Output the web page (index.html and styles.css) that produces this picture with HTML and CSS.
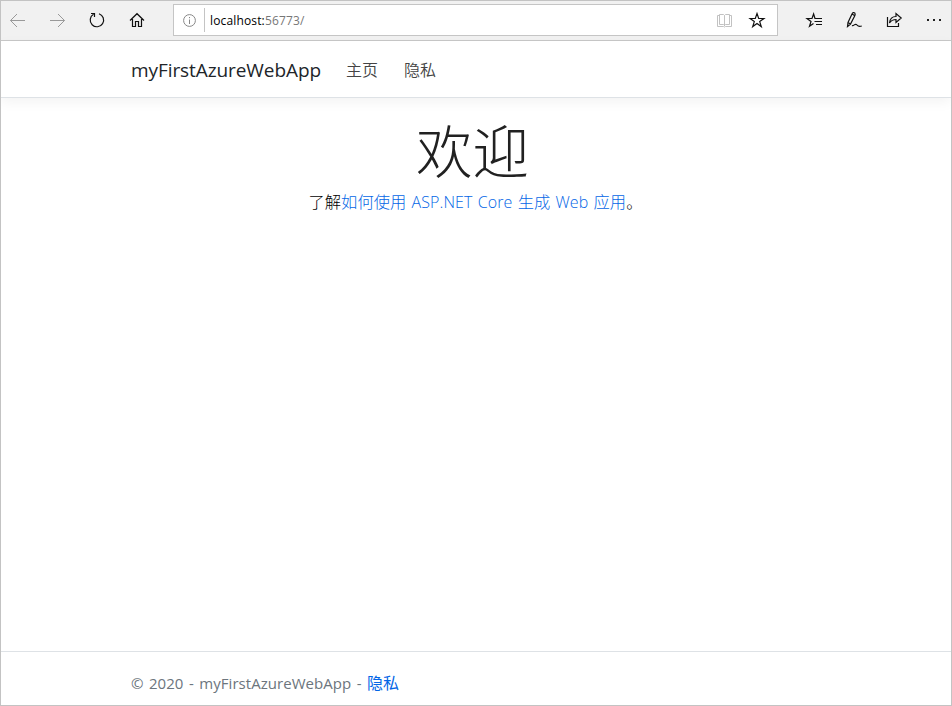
FILE: index.html
```html
<!DOCTYPE html>
<html lang="zh-CN">
<head>
<meta charset="utf-8">
<title>myFirstAzureWebApp</title>
<link rel="stylesheet" href="styles.css">
</head>
<body>
<div class="window">
  <div class="toolbar">
    <div class="nav-buttons">
      <svg class="icon muted" viewBox="0 0 16 16"><path d="M16 8.500H1.500M8 2L1.500 8.500 8 15"/></svg>
      <svg class="icon muted" viewBox="0 0 16 16"><path d="M1 8.500H15.500M9 2l6.500 6.500L9 15"/></svg>
      <svg class="icon" viewBox="0 0 16 16"><path class="bold" d="M10 1.700A6.700 6.700 0 1 1 4.500 2.300M2 1.500H5.500V5"/></svg>
      <svg class="icon" viewBox="0 0 16 16"><path class="bold" d="M1 8.500L8 1.700l7 6.800M3.500 7v7.500h3v-5h3v5h3V7"/></svg>
    </div>
    <div class="address">
      <svg class="info" viewBox="0 0 14 14"><circle cx="7.500" cy="7.500" r="5.900"/><path d="M7.500 6.500V11M7.500 4v1.200"/></svg>
      <span class="divider"></span>
      <span class="url">localhost:<span class="port">56773/</span></span>
      <svg class="icon book" viewBox="0 0 16 16"><path d="M8.500 3.500V14M8.500 3.500L7.500 2.500h-4v10h4l1 1 1-1h4v-10h-4zM3.500 3.500h-2v11H7.500l1 .5 1-.5h6v-11h-2"/></svg>
      <svg class="icon star" viewBox="0 0 16 16"><path class="bold" d="M8 1.500l1.700 5h5.200l-4.200 3.100 1.600 5L8 11.500l-4.300 3.100 1.600-5L1.100 6.500h5.200z"/></svg>
    </div>
    <div class="actions">
      <svg class="icon" viewBox="0 0 16 16"><path class="bold" d="M9 6.500L7.600 2 6 6.500H1l4 3-1.500 4.800L7.500 11.500M8.500 6.500H16M8.500 9.500H16M10 12.500h6"/></svg>
      <svg class="icon" viewBox="0 0 16 16"><path class="bold" d="M1.500 14.500L2 10.500 6 2Q7.200-.2 8.800 1 9.600 2 8.800 3.800L4.500 12zM6 2l2.500 1.500M2 10.500L4.500 12M6 13.500C8 14.500 9 10.500 11 13c1.200 1.600 2.500 1.800 4.800 1"/></svg>
      <svg class="icon" viewBox="0 0 16 16"><path class="bold" d="M1.500 5v9.500h11V11M3.500 11C4 6.500 6.500 4.500 10 4.500V1.500l5.200 4.500L10 10.500v-3C7 7.500 5 8.800 3.500 11z"/></svg>
      <svg class="icon" viewBox="0 0 16 16"><path class="dots" d="M1 7h2v2H1zM7 7h2v2H7zM13 7h2v2h-2z"/></svg>
    </div>
  </div>
  <header class="site-header">
    <span class="brand">myFirstAzureWebApp</span>
    <span class="nav-link">主页</span>
    <span class="nav-link">隐私</span>
  </header>
  <main class="content">
    <h1 class="title">欢迎</h1>
    <p class="lead">了解<a class="link">如何使用 <span class="latin">ASP.NET Core</span> 生成 <span class="latin">Web</span> 应用</a>。</p>
  </main>
  <footer class="site-footer"><span class="copyright">© 2020 - myFirstAzureWebApp - </span><a class="link">隐私</a></footer>
</div>
</body>
</html>
```
FILE: styles.css
```css
* { box-sizing: border-box; }
body {
  margin: 0;
  background: #fff;
  color: #212529;
  font-family: "Open Sans", "Noto Sans CJK SC", sans-serif;
}
.window {
  width: 952px;
  height: 706px;
  border: 1px solid #c3c3c3;
  display: flex;
  flex-direction: column;
  overflow: hidden;
}
.toolbar {
  height: 40px;
  flex: none;
  display: flex;
  align-items: center;
  padding-bottom: 1px;
  background: #f1f1f1;
  border-bottom: 1px solid #c8c8c8;
}
.nav-buttons { display: flex; gap: 24px; padding-left: 8px; width: 172px; }
.icon { width: 16px; height: 16px; flex: none; fill: none; stroke: #111; stroke-width: 1; overflow: visible; }
.bold { stroke-width: 1.2; }
.muted { stroke: #999; }
.dots { fill: #222; stroke: none; }
.address {
  width: 605px;
  height: 32px;
  display: flex;
  align-items: center;
  border: 1px solid #c5c5c5;
  background: #fff;
  padding: 0 12px 0 8px;
}
.info { width: 14px; height: 14px; fill: none; stroke: #888; stroke-width: 1; overflow: visible; }
.divider { width: 1px; height: 24px; background: #c4c4c4; margin: 0 5px 0 8px; }
.url { font-size: 12px; color: #000; letter-spacing: .15px; flex: 1; padding-top: 1px; }
.port { color: #777; }
.book { stroke: #bbb; stroke-width: .9; margin-right: 17px; }
.actions { display: flex; gap: 24px; padding-left: 28px; }
.site-header {
  height: 57px;
  flex: none;
  display: flex;
  align-items: center;
  padding: 0 0 0 130px;
  border-bottom: 1px solid #dee2e6;
  box-shadow: 0 4px 12px rgba(0,0,0,.05);
}
.brand { width: 215px; font-size: 19px; letter-spacing: -.08px; padding-top: 2px; }
.nav-link { width: 58px; font-size: 16px; font-weight: 350; color: #444; }
.content { flex: 1; text-align: center; padding: 18px 7px 0 0; }
.title { margin: 0; font-size: 56.5px; line-height: 72px; font-weight: 300; color: #212121; }
.lead { margin: 2px 0 0; padding-left: 6px; font-size: 16.3px; line-height: 24px; font-weight: 300; color: #000; word-spacing: 1px; }
.lead .latin { font-size: 16px; letter-spacing: .1px; }
.link { color: #0366e6; }
.site-footer {
  height: 54px;
  flex: none;
  border-top: 1px solid #dee2e6;
  padding: 19px 0 0 130px;
  font-size: 15px;
  line-height: 24px;
  color: #6c757d;
  white-space: pre;
}
.copyright { word-spacing: 1.5px; letter-spacing: .05px; }
.site-footer .link { font-size: 16px; }
```
